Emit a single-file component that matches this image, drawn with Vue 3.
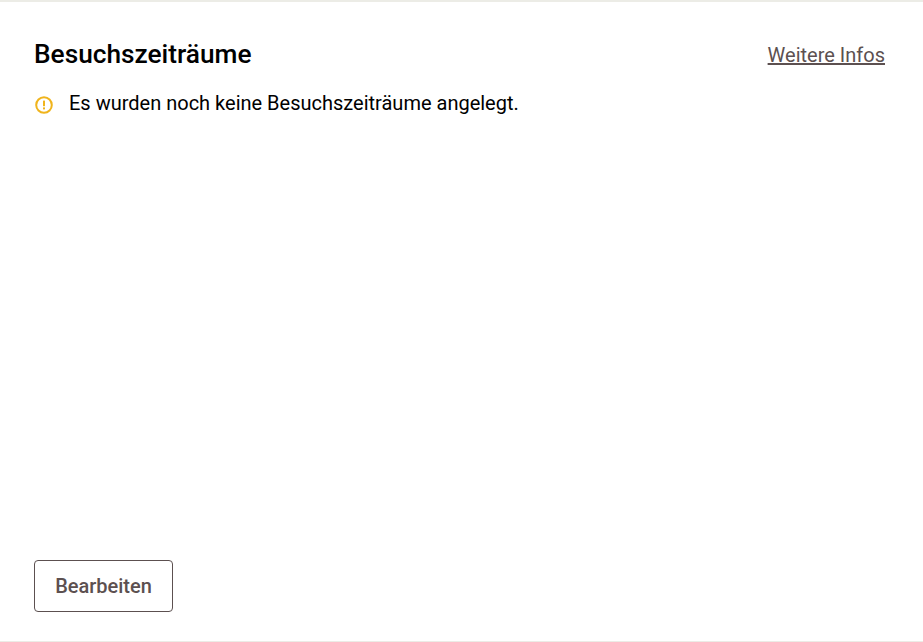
<script setup>
const title = 'Besuchszeiträume'
const message = 'Es wurden noch keine Besuchszeiträume angelegt.'
</script>

<template>
  <section class="card">
    <div class="content">
      <header class="head">
        <h2 class="title">{{ title }}</h2>
        <a class="more" href="#">Weitere Infos</a>
      </header>
      <div class="notice">
        <svg class="icon" width="18" height="18" viewBox="0 0 18 18" fill="none">
          <circle cx="9" cy="9" r="7.8" stroke="#f0b41c" stroke-width="2" />
          <rect x="8" y="4.6" width="2" height="5.6" fill="#f0b41c" />
          <rect x="8" y="11.4" width="2" height="2" fill="#f0b41c" />
        </svg>
        <span>{{ message }}</span>
      </div>
    </div>
    <button class="edit" type="button">Bearbeiten</button>
  </section>
</template>

<style scoped>
.card {
  box-sizing: border-box;
  height: 642px;
  padding: 25px 38px 29px 34px;
  display: flex;
  flex-direction: column;
  justify-content: space-between;
  align-items: flex-start;
  background: #fff;
  border-top: 2px solid #ecece6;
  border-bottom: 1px solid #ecece6;
  font-family: Roboto, "Liberation Sans", sans-serif;
}

.content {
  align-self: stretch;
}

.head {
  display: flex;
  justify-content: space-between;
  align-items: center;
  height: 54px;
  margin-bottom: 9px;
}

.title {
  margin: 0;
  font-size: 26.25px;
  font-weight: 500;
  color: #000;
}

.more {
  position: relative;
  top: 1px;
  font-size: 20px;
  color: #5c5050;
}

.notice {
  display: flex;
  align-items: center;
  gap: 16px;
  padding-left: 1px;
  font-size: 20px;
  line-height: 26px;
  color: #000;
}

.icon {
  flex: none;
  margin-top: 3px;
}

.edit {
  box-sizing: border-box;
  width: 139px;
  height: 52px;
  padding: 0;
  background: #fff;
  border: 1px solid #5c5050;
  border-radius: 4px;
  font: 500 20px Roboto, "Liberation Sans", sans-serif;
  color: #5c5050;
}
</style>
